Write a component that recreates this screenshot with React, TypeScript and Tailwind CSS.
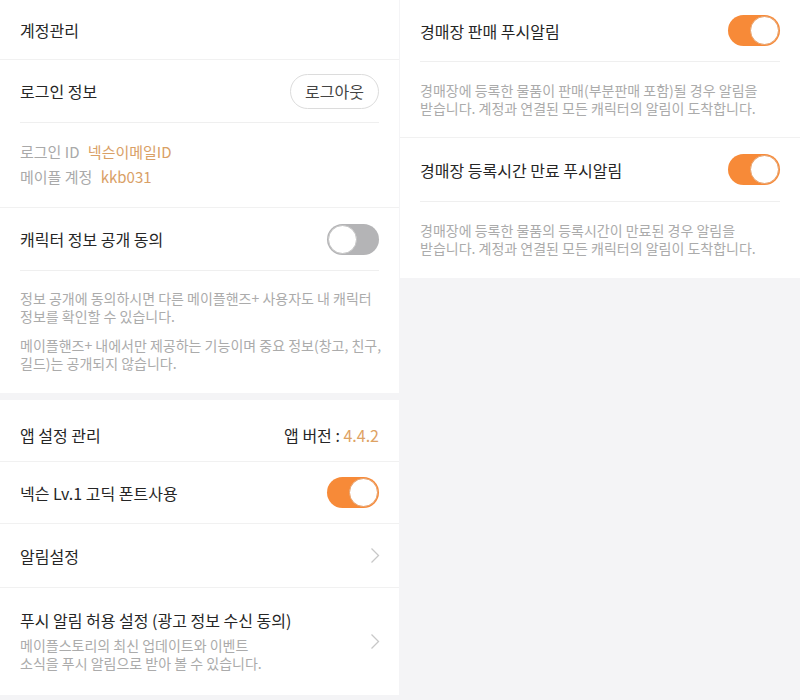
import React from 'react';

const font = { fontFamily: '"Noto Sans CJK KR", "Noto Sans", sans-serif' };

function Toggle({ on }: { on: boolean }) {
  return (
    <div
      className={
        on
          ? 'flex h-[31px] w-[52px] items-center justify-end rounded-full bg-[#f78a38] p-[1px]'
          : 'flex h-[31px] w-[52px] items-center justify-start rounded-full bg-[#b4b4b6] p-[1px]'
      }
    >
      <div
        className={
          on
            ? 'h-[29px] w-[29px] rounded-full border border-[#e6a06a] bg-white'
            : 'h-[29px] w-[29px] rounded-full border border-[#c4c4c4] bg-white'
        }
      />
    </div>
  );
}

function Chevron() {
  return (
    <svg width="10" height="17" viewBox="0 0 10 17" fill="none" className="shrink-0">
      <polyline points="1.5,1.5 8.5,8.5 1.5,15.5" stroke="#c8c8c8" strokeWidth="1.3" />
    </svg>
  );
}

export default function App() {
  return (
    <div className="flex h-[700px] w-[800px] bg-[#f4f4f6] text-[#262626]" style={font}>
      {/* left panel */}
      <div className="flex w-[399px] flex-col">
        <div className="bg-white">
          <div className="flex h-[60px] items-center border-b border-[#f1f1f1] px-5 text-[16px]">
            계정관리
          </div>

          <div className="border-b border-[#f1f1f1] px-5">
            <div className="flex h-[63px] items-center justify-between border-b border-[#efefef]">
              <span className="text-[16px]">로그인 정보</span>
              <button className="h-[35px] w-[89px] rounded-full border border-[#dcdcdc] text-[16px] text-[#444]">
                로그아웃
              </button>
            </div>
            <div className="pb-[18px] pt-4 text-[15px] leading-[25px] text-[#a9a9a9]">
              <div>
                로그인 ID <span className="ml-[5px] text-[#d9a066]">넥슨이메일ID</span>
              </div>
              <div>
                메이플 계정 <span className="ml-[5px] text-[#d9a066]">kkb031</span>
              </div>
            </div>
          </div>

          <div className="px-5">
            <div className="flex h-[63px] items-center justify-between border-b border-[#efefef]">
              <span className="text-[16px]">캐릭터 정보 공개 동의</span>
              <Toggle on={false} />
            </div>
            <div className="whitespace-nowrap pb-[21px] pt-[18px] text-[14px] leading-[18px] text-[#ababab]">
              <p>
                정보 공개에 동의하시면 다른 메이플핸즈+ 사용자도 내 캐릭터
                <br />
                정보를 확인할 수 있습니다.
              </p>
              <p className="mt-[11px]">
                메이플핸즈+ 내에서만 제공하는 기능이며 중요 정보(창고, 친구,
                <br />
                길드)는 공개되지 않습니다.
              </p>
            </div>
          </div>
        </div>

        <div className="mt-[7px] bg-white">
          <div className="flex h-[62px] items-center justify-between border-b border-[#f1f1f1] px-5 pt-2 text-[16px]">
            <span>앱 설정 관리</span>
            <span>
              앱 버전 : <span className="text-[#dea264]">4.4.2</span>
            </span>
          </div>
          <div className="flex h-[62px] items-center justify-between border-b border-[#f1f1f1] px-5 text-[16px]">
            <span>넥슨 Lv.1 고딕 폰트사용</span>
            <Toggle on />
          </div>
          <div className="flex h-[64px] items-center justify-between border-b border-[#f1f1f1] pl-5 pr-[19px] text-[16px]">
            <span>알림설정</span>
            <Chevron />
          </div>
          <div className="flex h-[107px] items-center justify-between pl-5 pr-[19px]">
            <div className="-mt-[2px]">
              <div className="text-[16px] leading-[22px]">푸시 알림 허용 설정 (광고 정보 수신 동의)</div>
              <div className="mt-[5px] whitespace-nowrap text-[14px] leading-[18px] text-[#ababab]">
                메이플스토리의 최신 업데이트와 이벤트
                <br />
                소식을 푸시 알림으로 받아 볼 수 있습니다.
              </div>
            </div>
            <Chevron />
          </div>
        </div>
      </div>

      {/* right panel */}
      <div className="ml-[1px] flex flex-1 flex-col">
        <div className="bg-white">
          <div className="border-b border-[#f1f1f1] px-5">
            <div className="flex h-[62px] items-center justify-between border-b border-[#efefef]">
              <span className="text-[16px]">경매장 판매 푸시알림</span>
              <Toggle on />
            </div>
            <div className="whitespace-nowrap pb-[20px] pt-[19px] text-[14px] leading-[18px] text-[#ababab]">
              경매장에 등록한 물품이 판매(부분판매 포함)될 경우 알림을
              <br />
              받습니다. 계정과 연결된 모든 캐릭터의 알림이 도착합니다.
            </div>
          </div>
          <div className="px-5">
            <div className="flex h-[64px] items-center justify-between border-b border-[#efefef]">
              <span className="text-[16px]">경매장 등록시간 만료 푸시알림</span>
              <Toggle on />
            </div>
            <div className="whitespace-nowrap pb-[21px] pt-[19px] text-[14px] leading-[18px] text-[#ababab]">
              경매장에 등록한 물품의 등록시간이 만료된 경우 알림을
              <br />
              받습니다. 계정과 연결된 모든 캐릭터의 알림이 도착합니다.
            </div>
          </div>
        </div>
      </div>
    </div>
  );
}
